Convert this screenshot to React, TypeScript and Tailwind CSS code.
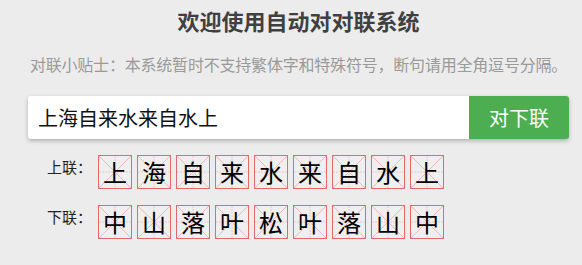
const FONT = "font-['Microsoft_YaHei','Noto_Sans_CJK_SC',sans-serif]";

const upper = ['上', '海', '自', '来', '水', '来', '自', '水', '上'];
const lower = ['中', '山', '落', '叶', '松', '叶', '落', '山', '中'];

function GridChar({ ch }: { ch: string }) {
  return (
    <div className="relative flex h-[34px] w-[34px] items-center justify-center border border-[#e36a6a] bg-[#efefef]">
      <svg className="absolute inset-0 h-full w-full" viewBox="0 0 32 32" preserveAspectRatio="none">
        <line x1="0" y1="0" x2="32" y2="32" stroke="#efaaaa" strokeWidth="0.8" />
        <line x1="32" y1="0" x2="0" y2="32" stroke="#efaaaa" strokeWidth="0.8" />
        <line x1="16" y1="0" x2="16" y2="32" stroke="#f0bcbc" strokeWidth="0.8" strokeDasharray="2 1" />
        <line x1="0" y1="16" x2="32" y2="16" stroke="#f0bcbc" strokeWidth="0.8" strokeDasharray="2 1" />
      </svg>
      <span className="relative text-[24px] leading-none text-black">{ch}</span>
    </div>
  );
}

function CoupletRow({ label, chars }: { label: string; chars: string[] }) {
  return (
    <div className="flex">
      <div className="w-[70px] pl-[19px] pt-[3px] text-[15px] leading-[18px] text-[#222] whitespace-nowrap">{label}</div>
      <div className="flex gap-[5px]">
        {chars.map((c, i) => (
          <GridChar key={i} ch={c} />
        ))}
      </div>
    </div>
  );
}

export default function App() {
  return (
    <div className={`h-[265px] w-full overflow-hidden bg-[#ececec] ${FONT}`}>
      <div className="ml-[28px] w-[541px]">
        <h1 className="pt-[8px] text-center text-[22px] font-bold leading-[24px] text-[#404040]">
          欢迎使用自动对对联系统
        </h1>
        <p className="mt-[22px] text-center text-[16px] leading-[20px] tracking-[-0.2px] text-[#9a9a9a] whitespace-nowrap">
          对联小贴士：本系统暂时不支持繁体字和特殊符号，断句请用全角逗号分隔。
        </p>
        <div className="mt-[22px] flex h-[43px] rounded-[3px] shadow-[0_2px_4px_rgba(0,0,0,0.25)]">
          <div className="flex flex-1 items-center rounded-l-[3px] bg-white pl-[10px] text-[20px] text-[#111]">
            上海自来水来自水上
          </div>
          <button className="w-[100px] rounded-r-[3px] bg-[#4cae50] text-[20px] text-white">对下联</button>
        </div>
        <div className="mt-[16px] flex flex-col gap-[16px]">
          <CoupletRow label="上联：" chars={upper} />
          <CoupletRow label="下联：" chars={lower} />
        </div>
      </div>
    </div>
  );
}
